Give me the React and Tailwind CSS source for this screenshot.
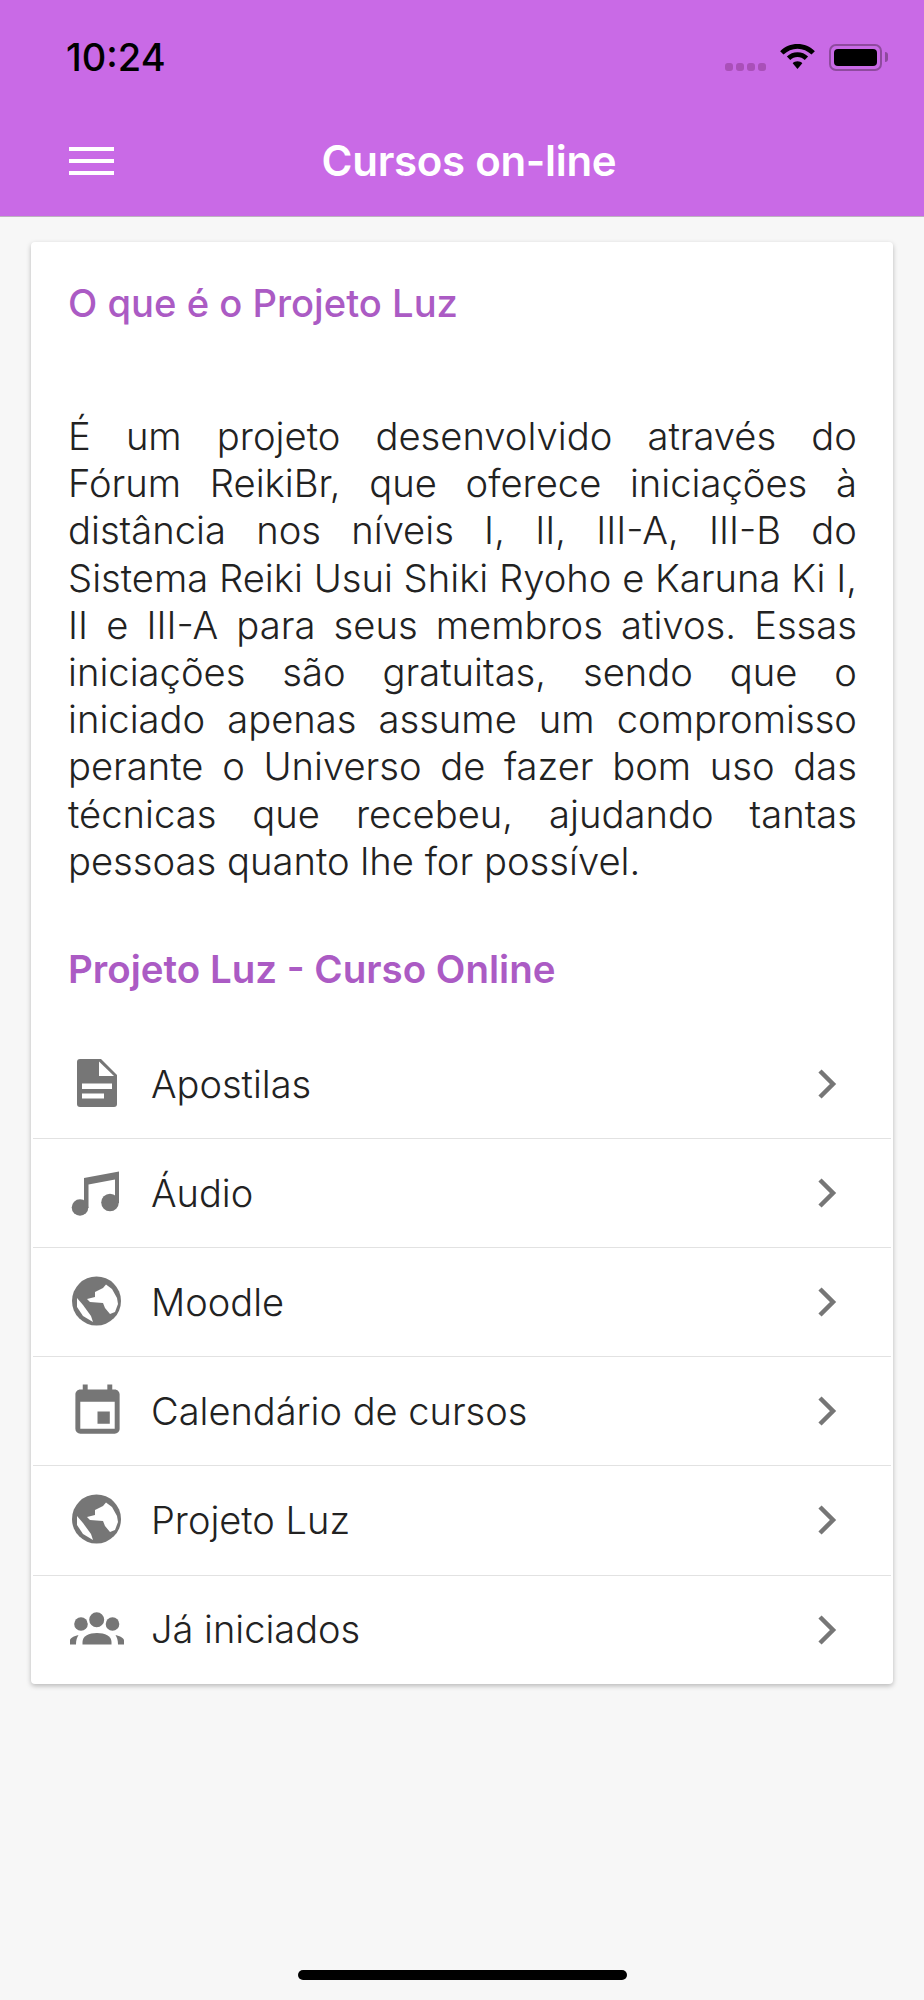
import { MdEvent } from "react-icons/md";

function FileIcon() {
  return (
    <svg width="64" height="64" viewBox="0 0 64 64">
      <path d="M15 7H36L52 23V52a3 3 0 0 1-3 3H15a3 3 0 0 1-3-3V10a3 3 0 0 1 3-3z" fill="#767676" />
      <path d="M34 9.500V24H49z" fill="#fff" />
      <rect x="17" y="31.500" width="30" height="5.500" fill="#fff" />
      <rect x="17" y="41.500" width="22" height="5" fill="#fff" />
    </svg>
  );
}

function MusicIcon() {
  return (
    <svg width="64" height="64" viewBox="0 0 64 64" fill="#767676">
      <circle cx="15" cy="46.500" r="8.300" />
      <circle cx="45" cy="41.500" r="8.800" />
      <path d="M19 17L54 10.500V42H50V18.500L23.500 23.500V47H19z" />
    </svg>
  );
}

function GlobeIcon() {
  return (
    <svg width="64" height="64" viewBox="0 0 64 64">
      <circle cx="31.500" cy="31" r="24.500" fill="#767676" />
      <path d="M22 29L30 27V22L38 18L41 14.500L47 19L52 28L53 34L50 42L45 44L40 38L38 33L25 32z" fill="#fff" />
      <path d="M12 28L18 35L26 46L28 52L18 46L12 37z" fill="#fff" />
    </svg>
  );
}

function GroupIcon() {
  return (
    <svg width="64" height="64" viewBox="0 0 64 64" fill="#767676">
      <circle cx="16" cy="26" r="6.800" />
      <circle cx="47.500" cy="26" r="6.800" />
      <circle cx="31.700" cy="21.700" r="8.500" stroke="#fff" strokeWidth="2" />
      <path d="M17.500 46.500V44C17.500 38 24 35 32 35s14.500 3 14.500 9v2.500z" />
      <path d="M5 46.500V42.500C5 40 9 38 13.500 37C12 39.500 11 42 11 46.500z" />
      <path d="M59 46.500V42.500C59 40 55 38 50.500 37C52 39.500 53 42 53 46.500z" />
    </svg>
  );
}

function EventIcon() {
  return <MdEvent size={59} color="#767676" />;
}

const items = [
  { label: "Apostilas", Icon: FileIcon },
  { label: "Áudio", Icon: MusicIcon },
  { label: "Moodle", Icon: GlobeIcon },
  { label: "Calendário de cursos", Icon: EventIcon },
  { label: "Projeto Luz", Icon: GlobeIcon },
  { label: "Já iniciados", Icon: GroupIcon },
];

function StatusIcons() {
  return (
    <div className="flex items-end mb-[7px]">
      <div className="flex gap-[3px] mr-[13px]">
        <span className="w-[8px] h-[8px] rounded-[3px] bg-[#a950b8]" />
        <span className="w-[8px] h-[8px] rounded-[3px] bg-[#a950b8]" />
        <span className="w-[8px] h-[8px] rounded-[3px] bg-[#a950b8]" />
        <span className="w-[8px] h-[8px] rounded-[3px] bg-[#a950b8]" />
      </div>
      <svg width="37" height="27" viewBox="0 0 38 28" className="mr-[13px]">
        <path d="M19 0C12 0 6 2.600 1 7.500L4.500 11C8.500 7.300 13.500 5 19 5s10.500 2.300 14.500 6L37 7.500C32 2.600 26 0 19 0z" fill="#000" />
        <path d="M19 8.500c-4.300 0-8 1.600-11 4.500l3.500 3.500c2-1.900 4.600-3 7.500-3s5.500 1.100 7.500 3L30 13c-3-2.900-6.700-4.500-11-4.500z" fill="#000" />
        <path d="M19 18c-2 0-3.700.700-5 2l5 6 5-6c-1.300-1.300-3-2-5-2z" fill="#000" />
      </svg>
      <div className="relative w-[53px] h-[27px] rounded-[7px] border-2 border-[#8e4a9e] p-[3px]">
        <div className="w-full h-full rounded-[4px] bg-black" />
        <span className="absolute right-[-8px] top-[6px] w-[3px] h-[10px] rounded-r-[3px] bg-[#8e4a9e]" />
      </div>
    </div>
  );
}

export default function App() {
  return (
    <div className="min-h-[2000px] flex flex-col bg-[#f7f7f7] font-['Inter','Liberation_Sans',sans-serif]">
      <header className="h-[217px] shrink-0 bg-[#c96ae6] border-b border-[#bdb2c0]">
        <div className="flex items-end justify-between pt-[36px] pl-[66px] pr-[42px]">
          <span className="text-[38px] leading-[42px] font-medium text-black">10:24</span>
          <StatusIcons />
        </div>
        <div className="flex items-center mt-[53px] pl-[69px] pr-[100px] h-[60px]">
          <div className="flex flex-col gap-[8.500px] w-[45px]">
            <span className="h-[3.500px] bg-white" />
            <span className="h-[3.500px] bg-white" />
            <span className="h-[3.500px] bg-white" />
          </div>
          <h1 className="flex-1 text-center text-[42px] leading-[48px] font-semibold text-white tracking-[-0.3px]">
            Cursos on-line
          </h1>
        </div>
      </header>

      <main className="mx-[31px] mt-[25px] rounded-[4px] bg-white shadow-[0_2px_5px_rgba(0,0,0,0.25)]">
        <section className="pl-[37px] pr-[36px] pt-[39px]">
          <h2 className="text-[38.200px] leading-[44px] font-medium text-[#ab5bc4]">O que é o Projeto Luz</h2>
          <p className="mt-[88px] text-[38.200px] leading-[47.200px] font-light text-[#222] text-justify">
            É um projeto desenvolvido através do Fórum ReikiBr, que oferece iniciações à distância nos níveis I, II, III-A, III-B do Sistema Reiki Usui Shiki Ryoho e Karuna Ki I, II e III-A para seus membros ativos. Essas iniciações são gratuitas, sendo que o iniciado apenas assume um compromisso perante o Universo de fazer bom uso das técnicas que recebeu, ajudando tantas pessoas quanto lhe for possível.
          </p>
          <h2 className="mt-[62px] text-[38.500px] leading-[44px] font-semibold text-[#ab5bc4]">Projeto Luz - Curso Online</h2>
        </section>

        <ul className="mt-[39px] px-[2px]">
          {items.map(({ label, Icon }, i) => (
            <li
              key={label}
              className={`h-[109.100px] last:h-[108px] flex items-center pl-[32px] pr-[53px] ${i < items.length - 1 ? "border-b border-[#e2e2e2]" : ""}`}
            >
              <span className="w-[64px] flex justify-center">
                <Icon />
              </span>
              <span className="ml-[22px] flex-1 text-[38px] font-light text-[#222]">{label}</span>
              <svg width="22" height="32" viewBox="0 0 22 32" fill="none" stroke="#767676" strokeWidth="4.500">
                <path d="M4 3L17 16L4 29" />
              </svg>
            </li>
          ))}
        </ul>
      </main>

      <div className="mt-auto mb-[20px] mx-auto w-[329px] h-[10px] rounded-full bg-black" />
    </div>
  );
}
